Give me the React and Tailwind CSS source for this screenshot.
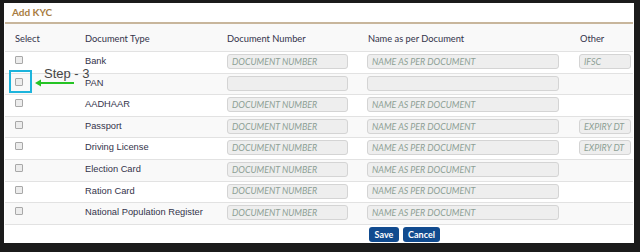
import React from "react";

const rows = [
  { type: "Bank", num: true, name: true, other: "IFSC" },
  { type: "PAN", num: "", name: "", other: null },
  { type: "AADHAAR", num: true, name: true, other: null },
  { type: "Passport", num: true, name: true, other: "EXPIRY DT" },
  { type: "Driving License", num: true, name: true, other: "EXPIRY DT" },
  { type: "Election Card", num: true, name: true, other: null },
  { type: "Ration Card", num: true, name: true, other: null },
  { type: "National Population Register", num: true, name: true, other: null },
];

function Input({ w, ph }) {
  return (
    <div
      className={`${w} h-[15px] rounded-[3px] border border-[#d4d4d4] bg-[#eeeeee] pl-[4px] flex items-center text-[8.9px] italic uppercase text-[#8d9f95] font-['Lato',sans-serif] whitespace-nowrap overflow-hidden`}
    >
      {ph}
    </div>
  );
}

function Checkbox() {
  return (
    <div className="w-[8px] h-[8px] rounded-[1px] border border-[#a8a8a8] bg-[#ececec]" />
  );
}

export default function App() {
  return (
    <div className="w-[640px] h-[252px] bg-[#1b1b1b] pt-[3px] pl-[4px] overflow-hidden">
      <div className="relative w-[630px] h-[240px] bg-white">
        <div className="mx-[1px] h-[21px] border-b-2 border-[#c8b69c] pl-[7px] pt-[3px] text-[10px] font-bold text-[#a87d42] font-['Lato',sans-serif] leading-[13px]">
          Add KYC
        </div>
        <div className="mx-[1px] font-['Lato',sans-serif] text-[9.3px] text-[#33334a]">
          <div className="grid grid-cols-[75px_142px_141px_212px_59px] h-[27px] items-center bg-[#f9f9f9] pt-[3px]">
            <div className="pl-[10px]">Select</div>
            <div className="pl-[5px]">Document Type</div>
            <div className="pl-[5px]">Document Number</div>
            <div className="pl-[5px]">Name as per Document</div>
            <div className="pl-[5px]">Other</div>
          </div>
          {rows.map((r, i) => (
            <div
              key={i}
              className={`grid grid-cols-[75px_142px_141px_212px_59px] h-[21.6px] border-t border-[#e2e2e2] ${
                i % 2 === 1 ? "bg-[#f9f9f9]" : "bg-white"
              }`}
            >
              <div className="pl-[10px] pt-[4px]">
                <Checkbox />
              </div>
              <div className="pl-[5px] pt-[3px] font-['Liberation_Sans',sans-serif] text-[9.3px] text-[#33334a] leading-[12px] whitespace-nowrap">
                {r.type}
              </div>
              <div className="pl-[5px] pt-[2px]">
                <Input w="w-[121px]" ph={r.num === true ? "DOCUMENT NUMBER" : ""} />
              </div>
              <div className="pl-[4px] pt-[2px]">
                <Input w="w-[192px]" ph={r.name === true ? "NAME AS PER DOCUMENT" : ""} />
              </div>
              <div className="pl-[4px] pt-[2px]">
                {r.other ? <Input w="w-[52px]" ph={r.other} /> : null}
              </div>
            </div>
          ))}
          <div className="border-t border-[#e2e2e2] flex gap-[4px] pl-[364px] pt-[2px]">
            <div className="h-[15px] w-[30px] rounded-[3px] bg-[#114b8f] text-white text-[9px] font-bold flex items-center justify-center">
              Save
            </div>
            <div className="h-[15px] w-[37px] rounded-[3px] bg-[#114b8f] text-white text-[9px] font-bold flex items-center justify-center">
              Cancel
            </div>
          </div>
        </div>

        {/* Step annotation overlay */}
        <div className="absolute left-[5px] top-[67px] w-[23px] h-[23px] border-2 border-[#1db4dc]" />
        <div className="absolute left-[40px] top-[63px] text-[13px] leading-[16px] text-[#454545] font-['Liberation_Sans',sans-serif]">
          Step - 3
        </div>
        <svg className="absolute left-[30px] top-[75px]" width="42" height="10" viewBox="0 0 42 10">
          <line x1="5" y1="5" x2="40" y2="5" stroke="#25c425" strokeWidth="2" />
          <polygon points="1,5 7,1.5 7,8.5" fill="#25c425" />
        </svg>
      </div>
    </div>
  );
}
